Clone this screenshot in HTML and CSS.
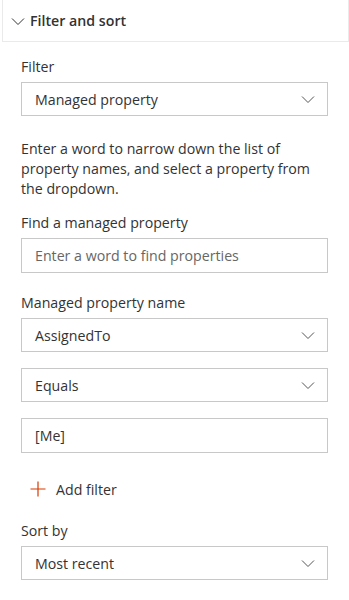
FILE: index.html
```html
<!DOCTYPE html>
<html lang="en">
<head>
    <meta charset="UTF-8">
    <meta name="viewport" content="width=device-width, initial-scale=1.0">
    <title>Filter and sort</title>
    <link rel="stylesheet" href="styles.css">
</head>
<body>

<div class="panel">
    <div class="group-header">
        <svg class="chevron" width="14" height="14" viewBox="0 0 14 14">
            <path d="M1 4.5 L7 10.5 L13 4.5" fill="none" stroke="#333" stroke-width="1"/>
        </svg>
        <span>Filter and sort</span>
    </div>

    <div class="group-body">
        <label class="field-label">Filter</label>
        <div class="dropdown">
            <span>Managed property</span>
            <svg class="caret" width="14" height="14" viewBox="0 0 14 14">
                <path d="M1 4.5 L7 10.5 L13 4.5" fill="none" stroke="#555" stroke-width="1"/>
            </svg>
        </div>

        <p class="help">Enter a word to narrow down the list of property names, and select a property from the dropdown.</p>

        <label class="field-label" for="find">Find a managed property</label>
        <input class="textbox" id="find" type="text" placeholder="Enter a word to find properties">

        <label class="field-label spaced">Managed property name</label>
        <div class="dropdown">
            <span>AssignedTo</span>
            <svg class="caret" width="14" height="14" viewBox="0 0 14 14">
                <path d="M1 4.5 L7 10.5 L13 4.5" fill="none" stroke="#555" stroke-width="1"/>
            </svg>
        </div>
        <div class="dropdown next">
            <span>Equals</span>
            <svg class="caret" width="14" height="14" viewBox="0 0 14 14">
                <path d="M1 4.5 L7 10.5 L13 4.5" fill="none" stroke="#555" stroke-width="1"/>
            </svg>
        </div>
        <input class="textbox next" type="text" value="[Me]">

        <button class="add-filter" type="button">
            <svg width="16" height="16" viewBox="0 0 16 16">
                <path d="M8 0.5 V15.5 M0.5 8 H15.5" fill="none" stroke="#d83b01" stroke-width="1.2"/>
            </svg>
            <span>Add filter</span>
        </button>

        <label class="field-label">Sort by</label>
        <div class="dropdown">
            <span>Most recent</span>
            <svg class="caret" width="14" height="14" viewBox="0 0 14 14">
                <path d="M1 4.5 L7 10.5 L13 4.5" fill="none" stroke="#555" stroke-width="1"/>
            </svg>
        </div>
    </div>
</div>

</body>
</html>
```

FILE: styles.css
```css
body {
    font-family: "Open Sans", "Noto Sans", Arial, sans-serif;
    font-size: 14.2px;
    color: #333;
    background-color: #fff;
    margin: 0;
}
.panel {
    width: 349px;
}
.group-header {
    display: flex;
    align-items: center;
    gap: 5px;
    height: 42px;
    margin-left: 2px;
    width: 347px;
    padding-left: 8px;
    box-sizing: border-box;
    border: 1px solid #eaeaea;
    border-top: none;
    font-size: 14.2px;
    font-weight: 600;
}
.group-body {
    padding: 15px 21px 0 21px;
}
.field-label {
    display: block;
    line-height: 20px;
    margin-bottom: 5px;
}
.field-label.spaced {
    margin-top: 20px;
}
.dropdown {
    display: flex;
    align-items: center;
    justify-content: space-between;
    height: 34px;
    padding: 0 12px 0 13px;
    box-sizing: border-box;
    border: 1px solid #c8c8c8;
}
.dropdown.next, .textbox.next {
    margin-top: 16px;
}
.help {
    margin: 23px 0 14px;
    line-height: 20px;
}
.textbox {
    display: block;
    width: 100%;
    height: 35px;
    padding: 0 13px;
    box-sizing: border-box;
    border: 1px solid #c8c8c8;
    font-family: inherit;
    font-size: 14.2px;
    color: #333;
    outline: none;
}
.textbox::placeholder {
    color: #666;
}
.add-filter {
    display: flex;
    align-items: center;
    gap: 10px;
    height: 32px;
    margin: 20px 0 16px 9px;
    padding: 0;
    border: none;
    background: none;
    font-family: inherit;
    font-size: 14.2px;
    color: #333;
    cursor: pointer;
}
```
